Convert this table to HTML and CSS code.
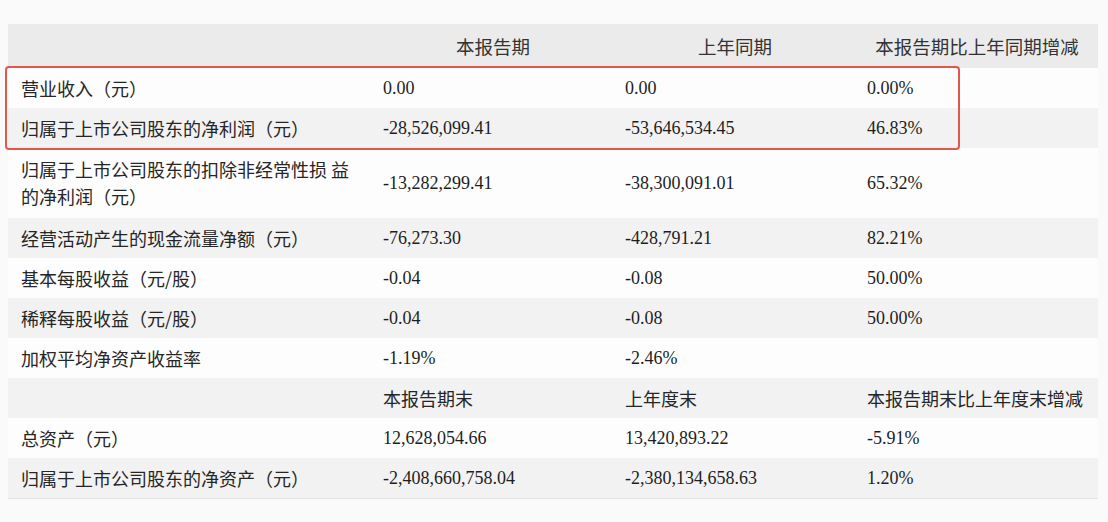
FILE: index.html
```html
<!DOCTYPE html>
<html lang="zh">
<head>
<meta charset="utf-8">
<title>主要会计数据</title>
<link rel="stylesheet" href="styles.css">
</head>
<body>
<div class="wrap">
  <table class="fin">
    <colgroup>
      <col class="c-label"><col class="c-num"><col class="c-num"><col class="c-num">
    </colgroup>
    <tr class="head">
      <td></td><td class="ctr">本报告期</td><td class="ctr">上年同期</td><td class="ctr">本报告期比上年同期增减</td>
    </tr>
    <tr class="row"><td class="lbl">营业收入（元）</td><td>0.00</td><td>0.00</td><td>0.00%</td></tr>
    <tr class="row alt"><td class="lbl">归属于上市公司股东的净利润（元）</td><td>-28,526,099.41</td><td>-53,646,534.45</td><td>46.83%</td></tr>
    <tr class="row tall"><td class="lbl">归属于上市公司股东的扣除非经常性损 益<br>的净利润（元）</td><td>-13,282,299.41</td><td>-38,300,091.01</td><td>65.32%</td></tr>
    <tr class="row alt"><td class="lbl">经营活动产生的现金流量净额（元）</td><td>-76,273.30</td><td>-428,791.21</td><td>82.21%</td></tr>
    <tr class="row"><td class="lbl">基本每股收益（元/股）</td><td>-0.04</td><td>-0.08</td><td>50.00%</td></tr>
    <tr class="row alt"><td class="lbl">稀释每股收益（元/股）</td><td>-0.04</td><td>-0.08</td><td>50.00%</td></tr>
    <tr class="row"><td class="lbl">加权平均净资产收益率</td><td>-1.19%</td><td>-2.46%</td><td></td></tr>
    <tr class="row alt sub"><td></td><td>本报告期末</td><td>上年度末</td><td>本报告期末比上年度末增减</td></tr>
    <tr class="row"><td class="lbl">总资产（元）</td><td>12,628,054.66</td><td>13,420,893.22</td><td>-5.91%</td></tr>
    <tr class="row alt last"><td class="lbl">归属于上市公司股东的净资产（元）</td><td>-2,408,660,758.04</td><td>-2,380,134,658.63</td><td>1.20%</td></tr>
  </table>
  <div class="highlight"></div>
</div>
</body>
</html>
```

FILE: styles.css
```css
html, body {
  margin: 0;
  padding: 0;
  background: #fafafa;
}
body {
  font-family: "Liberation Serif", "Noto Sans CJK SC", serif;
  color: #1e1e1e;
}
.wrap {
  position: relative;
  padding: 24px 10px 0 8px;
}
.fin {
  border-collapse: collapse;
  table-layout: fixed;
  width: 1090px;
}
.c-label { width: 364px; }
.c-num { width: 242px; }
.fin td {
  padding: 0 0 0 11px;
  vertical-align: middle;
  font-size: 18px;
  white-space: nowrap;
}
.head td {
  height: 44px;
  background: #ebebeb;
  font-family: "Noto Sans CJK SC", sans-serif;
  color: #333;
  font-size: 18.5px;
}
.head td.ctr {
  text-align: center;
  padding: 0;
}
.row td {
  height: 40px;
  background: #fdfdfd;
}
.row.alt td {
  background: #f2f2f2;
}
.row.tall td {
  height: 70px;
}
.fin td.lbl {
  padding-left: 13px;
  font-family: "Noto Sans CJK SC", sans-serif;
  font-size: 18px;
  line-height: 27px;
  color: #262626;
}
.sub td {
  font-family: "Noto Sans CJK SC", sans-serif;
  font-size: 18px;
  color: #262626;
}
.last td {
  border-bottom: 1px solid #e4e4e4;
}
.highlight {
  position: absolute;
  left: 5px;
  top: 66px;
  width: 951px;
  height: 80px;
  border: 2px solid #e0584c;
  border-radius: 4px;
  pointer-events: none;
}
```
